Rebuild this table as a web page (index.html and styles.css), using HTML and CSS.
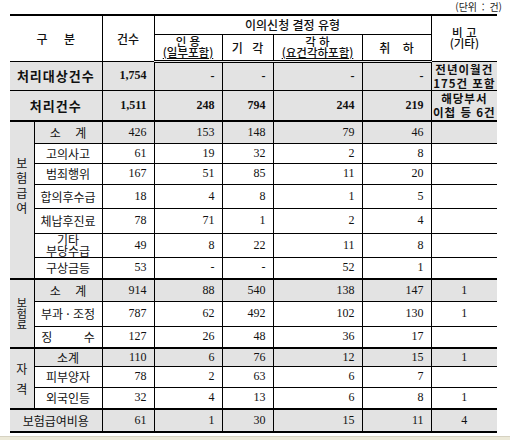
FILE: index.html
```html
<!DOCTYPE html>
<html lang="ko">
<head>
    <meta charset="UTF-8">
    <title>이의신청 결정 유형</title>
    <link rel="stylesheet" href="styles.css">
</head>
<body>
    <div class="page">
        <div class="unit">(단위 : 건)</div>
        <table class="tbl">
            <colgroup>
                <col class="c-grp"><col class="c-sub"><col class="c-cnt">
                <col class="c-a"><col class="c-b"><col class="c-c"><col class="c-d"><col class="c-e">
            </colgroup>
            <thead>
                <tr class="h1">
                    <th colspan="2" rowspan="2" class="sp14">구 분</th>
                    <th rowspan="2">건수</th>
                    <th colspan="4">이의신청 결정 유형</th>
                    <th rowspan="2" class="two">비 고<br>(기타)</th>
                </tr>
                <tr class="h2">
                    <th class="two">인 용<br><u>(일부포함)</u></th>
                    <th class="sp8">기 각</th>
                    <th class="two">각 하<br><u>(요건각하포함)</u></th>
                    <th class="sp10">취 하</th>
                </tr>
            </thead>
            <tbody>
                <tr class="gray bold r-total1">
                    <td colspan="2" class="lbl">처리대상건수</td>
                    <td class="n">1,754</td>
                    <td class="n">-</td><td class="n">-</td><td class="n">-</td><td class="n">-</td>
                    <td class="note">전년이월건<br>175건 포함</td>
                </tr>
                <tr class="gray bold r-total2">
                    <td colspan="2" class="lbl">처리건수</td>
                    <td class="n">1,511</td>
                    <td class="n">248</td><td class="n">794</td><td class="n">244</td><td class="n">219</td>
                    <td class="note">해당부서<br>이첩 등 6건</td>
                </tr>

                <tr class="gray r22 grp-start">
                    <td rowspan="7" class="grp grp-benefit">보<br>험<br>급<br>여</td>
                    <td class="lbl sp12">소 계</td>
                    <td class="n">426</td><td class="n">153</td><td class="n">148</td><td class="n">79</td><td class="n">46</td>
                    <td class="c"></td>
                </tr>
                <tr class="r20">
                    <td class="lbl white">고의사고</td>
                    <td class="n">61</td><td class="n">19</td><td class="n">32</td><td class="n">2</td><td class="n">8</td>
                    <td class="c"></td>
                </tr>
                <tr class="r21">
                    <td class="lbl white">범죄행위</td>
                    <td class="n">167</td><td class="n">51</td><td class="n">85</td><td class="n">11</td><td class="n">20</td>
                    <td class="c"></td>
                </tr>
                <tr class="r24">
                    <td class="lbl white">합의후수급</td>
                    <td class="n">18</td><td class="n">4</td><td class="n">8</td><td class="n">1</td><td class="n">5</td>
                    <td class="c"></td>
                </tr>
                <tr class="r25">
                    <td class="lbl white">체납후진료</td>
                    <td class="n">78</td><td class="n">71</td><td class="n">1</td><td class="n">2</td><td class="n">4</td>
                    <td class="c"></td>
                </tr>
                <tr class="r24">
                    <td class="lbl white tight">기타<br>부당수급</td>
                    <td class="n">49</td><td class="n">8</td><td class="n">22</td><td class="n">11</td><td class="n">8</td>
                    <td class="c"></td>
                </tr>
                <tr class="r22">
                    <td class="lbl white">구상금등</td>
                    <td class="n">53</td><td class="n">-</td><td class="n">-</td><td class="n">52</td><td class="n">1</td>
                    <td class="c"></td>
                </tr>

                <tr class="gray r22 grp-start">
                    <td rowspan="3" class="grp tight">보<br>험<br>료</td>
                    <td class="lbl sp12">소 계</td>
                    <td class="n">914</td><td class="n">88</td><td class="n">540</td><td class="n">138</td><td class="n">147</td>
                    <td class="c">1</td>
                </tr>
                <tr class="r25">
                    <td class="lbl white">부과 · 조정</td>
                    <td class="n">787</td><td class="n">62</td><td class="n">492</td><td class="n">102</td><td class="n">130</td>
                    <td class="c">1</td>
                </tr>
                <tr class="r22">
                    <td class="lbl white sp30">징 수</td>
                    <td class="n">127</td><td class="n">26</td><td class="n">48</td><td class="n">36</td><td class="n">17</td>
                    <td class="c"></td>
                </tr>

                <tr class="gray r18 grp-start">
                    <td rowspan="3" class="grp loose">자<br>격</td>
                    <td class="lbl">소계</td>
                    <td class="n">110</td><td class="n">6</td><td class="n">76</td><td class="n">12</td><td class="n">15</td>
                    <td class="c">1</td>
                </tr>
                <tr class="r21">
                    <td class="lbl white">피부양자</td>
                    <td class="n">78</td><td class="n">2</td><td class="n">63</td><td class="n">6</td><td class="n">7</td>
                    <td class="c"></td>
                </tr>
                <tr class="r22">
                    <td class="lbl white">외국인등</td>
                    <td class="n">32</td><td class="n">4</td><td class="n">13</td><td class="n">6</td><td class="n">8</td>
                    <td class="c">1</td>
                </tr>

                <tr class="gray r23 grp-start">
                    <td colspan="2" class="lbl">보험급여비용</td>
                    <td class="n">61</td><td class="n">1</td><td class="n">30</td><td class="n">15</td><td class="n">11</td>
                    <td class="c">4</td>
                </tr>
            </tbody>
        </table>
        <div class="statusbar"></div>
    </div>
</body>
</html>
```

FILE: styles.css
```css
*{
    box-sizing: border-box;
}

body{
    margin: 0;
    background: #fff;
    color: #111;
    font-family: "Liberation Serif", "Noto Sans CJK KR", serif;
    font-size: 12px;
}

.page{
    width: 510px;
    height: 440px;
    position: relative;
    padding: 0 13px 0 10px;
}

.unit{
    height: 14px;
    margin-right: -5px;
    text-align: right;
    font-family: "Noto Sans CJK KR", sans-serif;
    font-size: 10px;
    line-height: 14px;
    word-spacing: 2px;
    color: #222;
}

.tbl{
    width: 487px;
    border-collapse: collapse;
    table-layout: fixed;
    border-top: 2px solid #000;
    border-bottom: 2px solid #000;
}

.c-grp{ width: 24px; }
.c-sub{ width: 68px; }
.c-cnt{ width: 52px; }
.c-a{ width: 68px; }
.c-b{ width: 51px; }
.c-c{ width: 89px; }
.c-d{ width: 69px; }
.c-e{ width: 66px; }

.tbl th, .tbl td{
    border: 1px solid #000;
    padding: 0;
    line-height: 13px;
    white-space: nowrap;
}

.tbl tr > :first-child{
    border-left: none;
}

.tbl tr > :last-child{
    border-right: none;
}

.tbl th{
    font-family: "Noto Sans CJK KR", sans-serif;
    font-weight: 500;
    font-size: 12px;
    text-align: center;
}

.h1{ height: 19px; }
.h2{ height: 27px; }

.h2 th{
    border-bottom: 3px double #000;
}

.two{
    line-height: 11px !important;
    font-size: 11.5px !important;
}

.two u{
    text-underline-offset: 1px;
}

.sp8{ word-spacing: 6px; }
.sp10{ word-spacing: 9px; }
.sp12{ word-spacing: 11px; }
.sp14{ word-spacing: 13px; }
.sp30{ word-spacing: 28px; }

.gray td{
    background: #e3e3e3;
}

.gray td.white, .tbl td.white{
    background: #fff;
}

.grp{
    background: #e3e3e3;
    text-align: center;
    font-family: "Noto Sans CJK KR", sans-serif;
    line-height: 14px !important;
}

.grp-benefit{
    line-height: 15px !important;
    padding-bottom: 30px !important;
}

.grp.tight{
    font-size: 11px;
    line-height: 11px !important;
}

.grp.loose{
    line-height: 20px !important;
}

.lbl{
    text-align: center;
    font-family: "Noto Sans CJK KR", sans-serif;
    font-size: 12px;
}

.lbl.tight{
    line-height: 11px !important;
}

.n{
    text-align: right;
    padding-right: 7px !important;
}

.c{
    text-align: center;
    background: #fff;
}

.bold td{
    font-weight: bold;
}

.bold .lbl{
    font-size: 13px;
    letter-spacing: 1px;
}

.note{
    font-family: "Noto Sans CJK KR", "Liberation Serif", sans-serif;
    font-size: 11.5px;
    line-height: 14px !important;
    text-align: center;
    letter-spacing: 1px;
}

.r-total1{ height: 28px; }
.r-total2{ height: 31px; }
.r18{ height: 18px; }
.r20{ height: 20px; }
.r21{ height: 21px; }
.r22{ height: 22px; }
.r23{ height: 23px; }
.r24{ height: 24px; }
.r25{ height: 25px; }

.grp-start td{
    border-top: 2px solid #000;
}

.statusbar{
    position: absolute;
    left: 0;
    right: 0;
    bottom: 0;
    height: 4px;
    background: #ece9d8;
    border-top: 1px solid #d6d2c2;
}
```
